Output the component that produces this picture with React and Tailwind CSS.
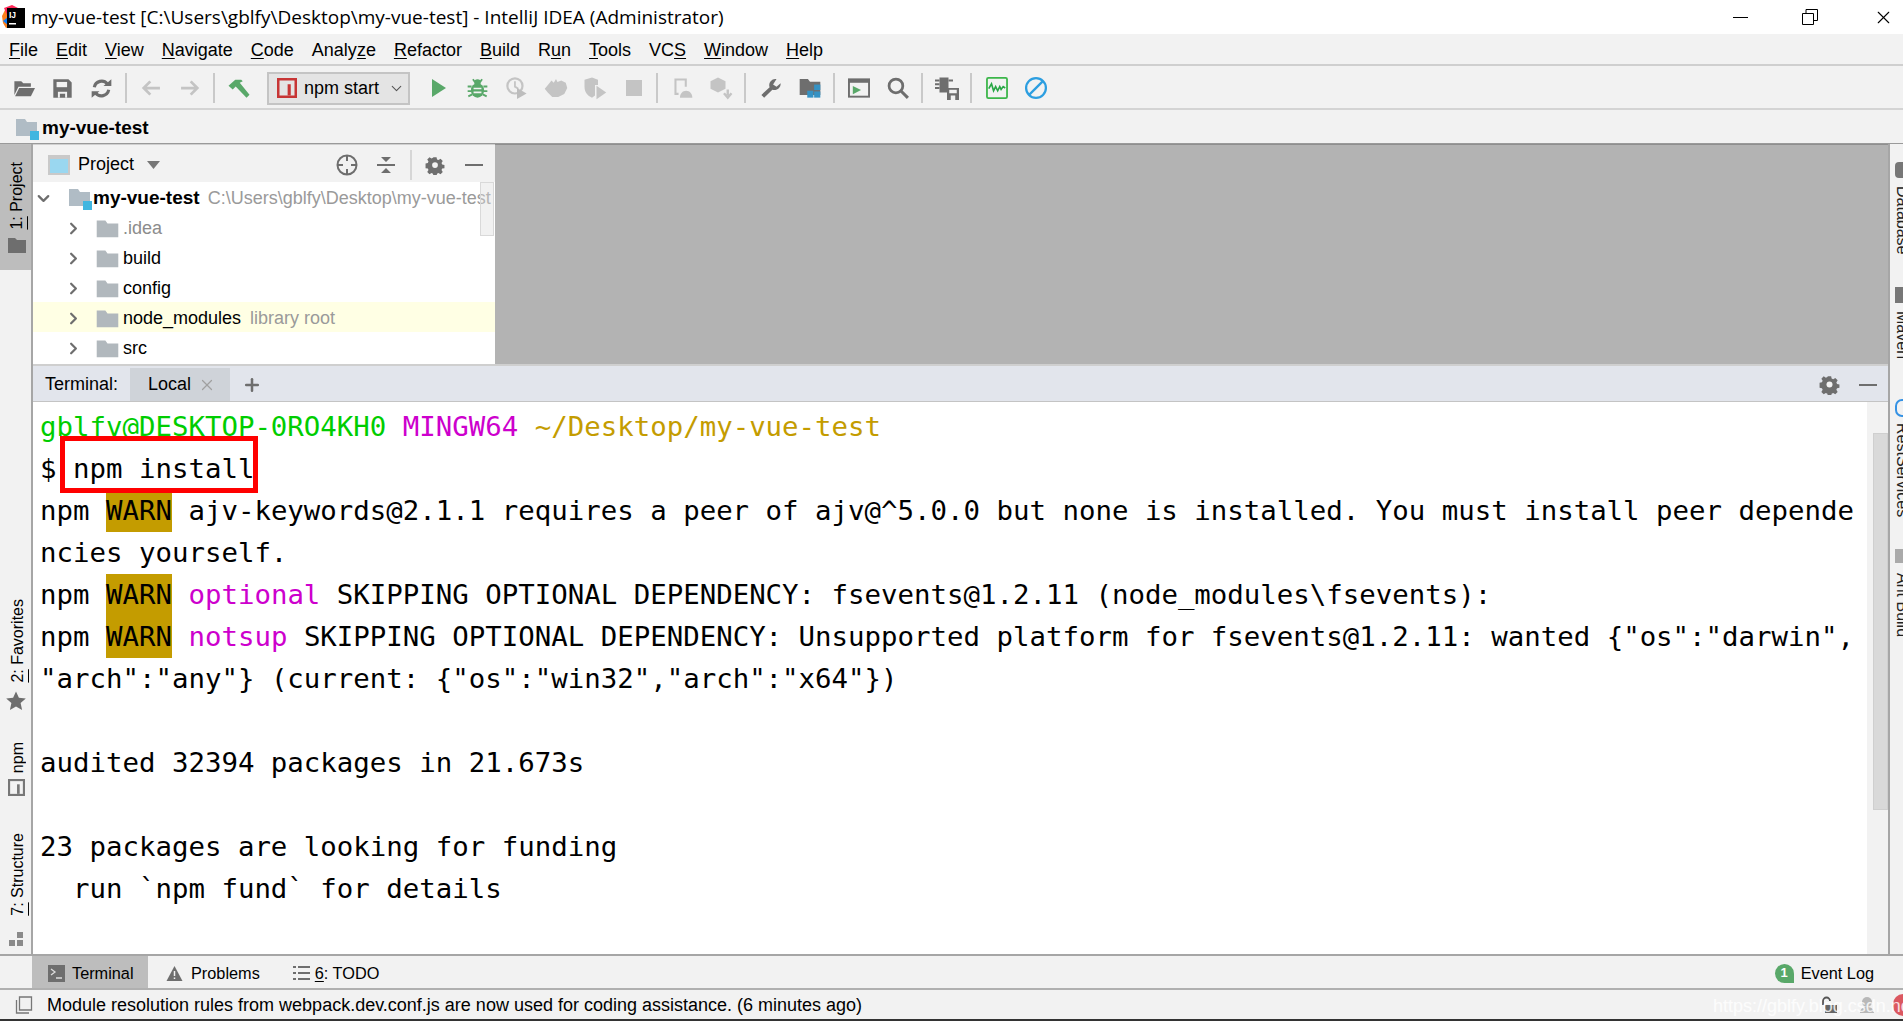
import { ChevronDown, ChevronRight, Plus, X } from 'lucide-react'

const sans = "font-['Liberation_Sans',Arial,sans-serif]"

const Svg = ({ size = 22, children, className = '' }) => (
  <svg width={size} height={size} viewBox="0 0 16 16" className={className}>
    {children}
  </svg>
)

const Folder = ({ fill = '#afb1b3', size = 23 }) => (
  <Svg size={size}>
    <path d="M0.5 2.5h6l1.5 2h7.5v9.5H0.5z" fill={fill} />
  </Svg>
)

const FolderBlue = () => (
  <svg width="24" height="24" viewBox="0 0 24 24">
    <path d="M1 3h9l2 3h10v14H1z" fill="#b0bcc5" />
    <rect x="15" y="15" width="9" height="9" fill="#40b6e0" />
  </svg>
)

const Gear = ({ size = 20 }) => (
  <Svg size={size}>
    <path
      d="M6.6 1h2.8l.4 2 1.3.6 1.8-1.1 2 2-1.1 1.8.6 1.3 2 .4v2.8l-2 .4-.6 1.3 1.1 1.8-2 2-1.8-1.1-1.3.6-.4 2H6.6l-.4-2-1.3-.6-1.8 1.1-2-2 1.1-1.8-.6-1.3-2-.4V6.6l2-.4.6-1.3L1.1 3.100l2-2 1.8 1.100 1.3-.6z"
      transform="translate(.8 .8) scale(.9)"
      fill="#6e6e6e"
    />
    <circle cx="8" cy="8" r="2.3" fill="#f2f2f2" />
  </Svg>
)

const Slot = ({ children }) => (
  <div className="w-[39px] h-full flex items-center justify-center shrink-0">{children}</div>
)
const Sep = ({ className = 'mx-[4px]' }) => <div className={`${className} w-[2px] h-[30px] bg-[#c9c9c9] shrink-0`} />

const toolbar = {
  open: (
    <Svg>
      <path d="M1 3h5l1.500 1.500H13V7H4L1 13z" fill="#6e6e6e" />
      <path d="M4.500 8H16l-3 6H1.500z" fill="#6e6e6e" />
    </Svg>
  ),
  save: (
    <Svg size={21}>
      <path d="M1 1h11.500L15 3.500V15H1z" fill="#6e6e6e" />
      <rect x="3.500" y="3" width="8" height="4" fill="#f2f2f2" />
      <rect x="4.500" y="10.500" width="7" height="4.500" fill="#f2f2f2" />
      <rect x="6" y="12" width="4" height="3" fill="#6e6e6e" />
    </Svg>
  ),
  sync: (
    <Svg size={21}>
      <path d="M2.500 7a5.700 5.700 0 0 1 10-2.500M13.500 9a5.700 5.700 0 0 1-10 2.500" fill="none" stroke="#6e6e6e" strokeWidth="2.400" />
      <path d="M9.500 6h6V1zM6.500 10h-6v5z" fill="#6e6e6e" />
    </Svg>
  ),
  back: (
    <Svg>
      <path d="M14.500 8H3M7.500 3.200 2.700 8l4.800 4.800" fill="none" stroke="#c4c4c4" strokeWidth="2" />
    </Svg>
  ),
  forward: (
    <Svg>
      <path d="M1.500 8H13M8.500 3.200 13.300 8l-4.800 4.800" fill="none" stroke="#c4c4c4" strokeWidth="2" />
    </Svg>
  ),
  hammer: (
    <Svg size={24}>
      <path d="M1 6.500 5.500 2.500h4l1 1-2 1 6.500 8-2 2L5.800 7l-2 2z" fill="#59a869" />
    </Svg>
  ),
  run: (
    <svg width="18" height="20" viewBox="0 0 18 20">
      <path d="M2 1l14 9-14 9z" fill="#59a869" />
    </svg>
  ),
  bug: (
    <Svg size={21}>
      <ellipse cx="8" cy="9.500" rx="5" ry="5.500" fill="#59a869" />
      <circle cx="8" cy="3.500" r="2.500" fill="#59a869" />
      <path d="M4.500 1 6 3M11.500 1 10 3M0.500 6.500h3M12.500 6.500h3M0.500 10h3M12.500 10h3M1 14l3-1.500M15 14l-3-1.500" stroke="#59a869" strokeWidth="1.400" />
      <path d="M5 8h6M5 11h6" stroke="#f2f2f2" strokeWidth="1.300" />
    </Svg>
  ),
  coverage: (
    <Svg>
      <circle cx="6.500" cy="6.500" r="5.500" fill="none" stroke="#c4c4c4" strokeWidth="1.600" />
      <path d="M6.500 3v4l2.500 1.500" fill="none" stroke="#c4c4c4" strokeWidth="1.300" />
      <path d="M8 8l7 4-7 4z" fill="#bdbdbd" />
    </Svg>
  ),
  profile: (
    <Svg size={24}>
      <path d="M0.500 8.500 3 5.500 5 3l1.500 1.500L8 2l1 2 2.500-1 3 1.500 1 3.500-2 4-4 2H5.500L2.500 11z" fill="#c4c4c4" />
    </Svg>
  ),
  shield: (
    <Svg size={24}>
      <path d="M1 2.500 6 1l4 1.500V6H8v7l-2 1.500C3 13 1 11 1 7z" fill="#c4c4c4" />
      <path d="M9 6.500l6.500 4.500L9 15.500z" fill="#c4c4c4" />
    </Svg>
  ),
  stop: <div className="w-[16px] h-[16px] bg-[#c4c4c4]" />,
  android: (
    <Svg>
      <path d="M2.500 1h9v6h-1.500V2.500H4v9h1.500V13H2.500z" fill="#c4c4c4" />
      <path d="M6.500 15c0-3 2-5 4.500-5s4.500 2 4.500 5z" fill="#c4c4c4" />
    </Svg>
  ),
  sdk: (
    <Svg size={24}>
      <path d="M6 1l5 2.500v5L6 11 1 8.500v-5z" fill="#c4c4c4" />
      <path d="M12.500 9v4M10 11.500l2.500 3 2.500-3" fill="none" stroke="#c4c4c4" strokeWidth="1.600" />
    </Svg>
  ),
  wrench: (
    <Svg>
      <path d="M15 4.500 12 7 9.500 5.500 12 1.500A4.500 4.500 0 0 0 7 7.500L1 13l2 2 6-5.800a4.500 4.500 0 0 0 6-4.700z" fill="#6e6e6e" />
    </Svg>
  ),
  folders: (
    <Svg>
      <path d="M0.500 1.500h6L8 3.500h7.500v9.500H0.500z" fill="#6e6e6e" />
      <rect x="11" y="5.500" width="4.500" height="4" fill="#3592c4" />
      <rect x="6" y="10" width="4.500" height="5" fill="#3592c4" />
      <rect x="11" y="10.500" width="4.500" height="4.500" fill="#3592c4" />
    </Svg>
  ),
  terminalRun: (
    <Svg>
      <rect x="0.700" y="1.700" width="14.600" height="12.600" fill="none" stroke="#6e6e6e" strokeWidth="1.400" />
      <rect x="0.700" y="1.700" width="14.600" height="2.500" fill="#6e6e6e" />
      <path d="M3.500 6.500 9.500 9.500 3.500 12.500z" fill="#59a869" />
    </Svg>
  ),
  search: (
    <Svg>
      <circle cx="6.500" cy="6.500" r="5" fill="none" stroke="#6e6e6e" strokeWidth="2" />
      <path d="M10 10l5.200 5.200" stroke="#6e6e6e" strokeWidth="2.200" />
    </Svg>
  ),
  memory: (
    <Svg size={24}>
      <rect x="3" y="1" width="6" height="10" fill="#6e6e6e" />
      <path d="M0 3h3M0 5.500h3M0 8h3M9 3h3" stroke="#6e6e6e" strokeWidth="1.200" />
      <rect x="8" y="8" width="8" height="8" fill="#6e6e6e" />
      <rect x="9.500" y="9.200" width="5" height="2.300" fill="#f2f2f2" />
      <rect x="10.500" y="13" width="3" height="3" fill="#f2f2f2" />
    </Svg>
  ),
  monitor: (
    <Svg>
      <rect x="0.700" y="0.700" width="14.600" height="14.600" rx="1" fill="none" stroke="#3cb64a" strokeWidth="1.300" />
      <path d="M2 8.500 4 5l1.500 5 1.500-3 1.500 3L10 7l1 2 1.500-2 1.500 1" fill="none" stroke="#28a745" strokeWidth="1.200" />
    </Svg>
  ),
  ban: (
    <Svg size={24}>
      <circle cx="8" cy="8" r="6.600" fill="none" stroke="#2c9ee0" strokeWidth="1.500" />
      <path d="M3.400 12.600 12.600 3.400" stroke="#2c9ee0" strokeWidth="1.500" />
    </Svg>
  ),
}

const NpmMark = ({ size = 20, color = '#c73535', className = '' }) => (
  <Svg size={size} className={className}>
    <rect x="1" y="1" width="14" height="14" fill="none" stroke={color} strokeWidth="2" />
    <rect x="8.500" y="5" width="2.500" height="9" fill={color} />
  </Svg>
)

const U = ({ children }) => <span className="underline underline-offset-2">{children}</span>

const menus = [
  ['', 'F', 'ile'], ['', 'E', 'dit'], ['', 'V', 'iew'], ['', 'N', 'avigate'], ['', 'C', 'ode'],
  ['Analy', 'z', 'e'], ['', 'R', 'efactor'], ['', 'B', 'uild'], ['R', 'u', 'n'], ['', 'T', 'ools'],
  ['VC', 'S', ''], ['', 'W', 'indow'], ['', 'H', 'elp'],
]

const TreeRow = ({ name, hint, dim, active }) => (
  <div className={`h-[30px] pt-[2px] flex items-center shrink-0 ${active ? 'bg-[#ffffe4]' : ''}`}>
    <ChevronRight size={19} strokeWidth={2.800} className="ml-[31px] text-[#6e6e6e]" />
    <div className="ml-[13px] w-[23px] h-[23px]"><Folder fill="#b1b8bd" /></div>
    <span className={`ml-[4px] ${dim ? 'text-[#8c8c8c]' : 'text-black'}`}>{name}</span>
    {hint && <span className="ml-[9px] text-[#9a9a9a]">{hint}</span>}
  </div>
)

const VTab = ({ children, className = '' }) => (
  <span className={`[writing-mode:vertical-rl] rotate-180 text-[16px] leading-none whitespace-pre ${className}`}>{children}</span>
)

const Warn = () => <span className="inline-block h-[42px] bg-[#c49c00]">WARN</span>
const Pink = ({ children }) => <span className="text-[#cd00cd]">{children}</span>

const Line = ({ children, className = '' }) => (
  <div className={`h-[42px] leading-[42px] whitespace-pre ${className}`}>{children || ' '}</div>
)

const RightTab = ({ label, icon, className }) => (
  <div className={`flex flex-col items-start ${className}`}>
    <div className="h-[18px] w-[14px] pl-[5px]">{icon}</div>
    <span className="[writing-mode:vertical-rl] pl-[4px] text-[16px] leading-none whitespace-pre mt-[6px] text-[#222]">{label}</span>
  </div>
)

export default function App() {
  return (
    <div className={`w-[1903px] h-[1021px] overflow-hidden flex flex-col bg-[#f2f2f2] text-black relative ${sans}`}>
      {/* title */}
      <div className="h-[34px] bg-white flex items-center shrink-0 relative">
        <svg width="24" height="24" viewBox="0 0 24 24" className="ml-[2px]">
          <path d="M0 11 4 3l6-2v20l-6 2L1 18z" fill="#fc801d" />
          <path d="M2 3l8-3 6 3L6 12z" fill="#fe2857" />
          <path d="M1 16l5-4v8z" fill="#087cfa" />
          <rect x="5" y="3" width="18" height="20" fill="#000" />
          <text x="7" y="13" fontSize="8.500" fontWeight="700" fill="#fff" fontFamily="Liberation Sans">IJ</text>
          <rect x="7" y="18" width="7" height="1.500" fill="#fff" />
        </svg>
        <span className="ml-[5px] text-[19px] font-['Open_Sans',sans-serif]">
          my-vue-test [C:\Users\gblfy\Desktop\my-vue-test] - IntelliJ IDEA (Administrator)
        </span>
        <div className="ml-auto flex items-center h-full">
          <div className="w-[15px] h-[1px] bg-black mr-[54px]" />
          <svg width="16" height="16" viewBox="0 0 16 16" className="mr-[55px]">
            <path d="M0.500 4.500h11v11h-11zM4 4.500v-4h11.500v11h-4" fill="none" stroke="#000" />
          </svg>
          <X size={21} strokeWidth={1.100} absoluteStrokeWidth className="mr-[9px] text-black" />
        </div>
      </div>

      {/* menu */}
      <div className="h-[32px] pt-[2px] flex items-center gap-[18px] pl-[9px] text-[18px] border-b-2 border-[#cfcfcf] shrink-0">
        {menus.map(([a, b, c]) => (
          <span key={a + b + c}>{a}<U>{b}</U>{c}</span>
        ))}
      </div>

      {/* toolbar */}
      <div className="h-[44px] pt-[2px] flex items-center pl-[4px] border-b-2 border-[#d4d4d4] shrink-0">
        <Slot>{toolbar.open}</Slot>
        <Slot>{toolbar.save}</Slot>
        <Slot>{toolbar.sync}</Slot>
        <Sep />
        <Slot>{toolbar.back}</Slot>
        <Slot>{toolbar.forward}</Slot>
        <Sep />
        <Slot>{toolbar.hammer}</Slot>
        <div className="ml-[9px] mr-[9px] w-[143px] h-[33px] shrink-0 bg-[#e4e4e4] border-2 border-[#c4c4c4] flex items-center text-[18px]">
          <NpmMark size={20} className="ml-[8px]" />
          <span className="ml-[7px]">npm start</span>
          <ChevronDown size={17} strokeWidth={1.500} className="ml-[9px] text-[#555]" />
        </div>
        <Slot>{toolbar.run}</Slot>
        <Slot>{toolbar.bug}</Slot>
        <Slot>{toolbar.coverage}</Slot>
        <Slot>{toolbar.profile}</Slot>
        <Slot>{toolbar.shield}</Slot>
        <Slot>{toolbar.stop}</Slot>
        <Sep className="ml-[3px] mr-[4px]" />
        <Slot>{toolbar.android}</Slot>
        <Slot>{toolbar.sdk}</Slot>
        <Sep className="ml-[4px] mr-[5px]" />
        <Slot>{toolbar.wrench}</Slot>
        <Slot>{toolbar.folders}</Slot>
        <Sep />
        <Slot>{toolbar.terminalRun}</Slot>
        <Slot>{toolbar.search}</Slot>
        <Sep />
        <Slot>{toolbar.memory}</Slot>
        <Sep className="ml-[4px] mr-[5px]" />
        <Slot>{toolbar.monitor}</Slot>
        <Slot>{toolbar.ban}</Slot>
      </div>

      {/* navigation bar */}
      <div className="h-[34px] pt-[3px] flex items-center pl-[15px] shrink-0 border-b border-[#9a9a9a]">
        <FolderBlue />
        <span className="ml-[3px] text-[19px] font-bold">my-vue-test</span>
      </div>

      {/* main */}
      <div className="flex-1 min-h-0 flex">
        {/* left strip */}
        <div className="w-[33px] shrink-0 border-r-2 border-[#a6a6a6] flex flex-col items-center">
          <div className="w-[31px] h-[126px] bg-[#bdbdbd] flex flex-col items-center pt-[18px] pl-[3px] shrink-0">
            <VTab><U>1:</U> Project</VTab>
            <svg width="18" height="15" viewBox="0 0 18 15" className="mt-[8px]">
              <path d="M0 0h7l2 2h9v13H0z" fill="#6e6e6e" />
            </svg>
          </div>
          <div className="mt-[329px] pl-[4px]"><VTab><U>2:</U> Favorites</VTab></div>
          <svg width="20" height="20" viewBox="0 0 20 20" className="mt-[1px] ml-[1px]">
            <path d="M10 0.500l2.900 6.300 6.900.7-5.200 4.600 1.500 6.900L10 15.500 3.900 19l1.500-6.900L.2 7.500l6.900-.7z" fill="#6e6e6e" />
          </svg>
          <div className="mt-[31px] pl-[4px]"><VTab>npm</VTab></div>
          <div className="mt-[-1px] h-[17px] ml-[1px]"><NpmMark size={17} color="#777" /></div>
          <div className="mt-[37px] pl-[4px]"><VTab><U>7:</U> Structure</VTab></div>
          <svg width="16" height="16" viewBox="0 0 16 16" className="mt-[9px]">
            <path d="M9 1h6v6H9zM1 9h6v6H1zM9 9h6v6H9z" fill="#8a8a8a" />
          </svg>
        </div>

        {/* centre */}
        <div className="flex-1 min-w-0 flex flex-col">
          <div className="h-[220px] flex shrink-0">
            <div className="w-[462px] flex flex-col shrink-0 bg-white text-[18px] relative">
              <div className="h-[38px] pt-[2px] bg-[#f2f2f2] flex items-center shrink-0 text-[18px] border-t border-[#d0d0d0]">
                <svg width="22" height="20" viewBox="0 0 22 20" className="ml-[15px]">
                  <rect x="0" y="0" width="22" height="20" fill="#c9c9c9" />
                  <rect x="2" y="4" width="18" height="14" fill="#9ad7f0" />
                </svg>
                <span className="ml-[8px]">Project</span>
                <svg width="13" height="8" viewBox="0 0 13 8" className="ml-[13px]"><path d="M0 0h13L6.500 8z" fill="#777" /></svg>
                <svg width="22" height="22" viewBox="0 0 22 22" className="ml-[176px]">
                  <circle cx="11" cy="11" r="9.500" fill="none" stroke="#6e6e6e" strokeWidth="2" />
                  <path d="M11 1v6M11 15v6M1 11h6M15 11h6" stroke="#6e6e6e" strokeWidth="2" />
                </svg>
                <svg width="18" height="18" viewBox="0 0 18 18" className="ml-[19px]">
                  <path d="M0 9h18" stroke="#6e6e6e" strokeWidth="2" />
                  <path d="M4 1h10L9 6zM4 17h10l-5-5z" fill="#6e6e6e" />
                </svg>
                <div className="ml-[15px] w-[2px] h-[30px] bg-[#d6d6d6]" />
                <div className="ml-[13px]"><Gear /></div>
                <div className="ml-[20px] w-[18px] h-[2px] bg-[#6e6e6e]" />
              </div>
              <div className="h-[30px] pt-[2px] flex items-center shrink-0 whitespace-pre">
                <ChevronDown size={19} strokeWidth={2.800} className="ml-[1px] text-[#6e6e6e]" />
                <div className="ml-[15px]"><FolderBlue /></div>
                <span className="ml-[1px] font-bold text-[19px]">my-vue-test</span>
                <span className="ml-[8px] text-[#9a9a9a]">C:\Users\gblfy\Desktop\my-vue-test</span>
              </div>
              <TreeRow name=".idea" dim />
              <TreeRow name="build" />
              <TreeRow name="config" />
              <TreeRow name="node_modules" hint="library root" active />
              <TreeRow name="src" />
              <div className="absolute right-[1px] top-[38px] w-[14px] h-[54px] bg-[#dcdcdc]/40 border border-[#d9d9d9]" />
            </div>
            <div className="flex-1 bg-[#b3b3b3] border-t border-[#8f8f8f]" />
          </div>

          {/* terminal */}
          <div className="h-[38px] pt-[2px] bg-[#e2e5ec] flex items-center text-[18px] shrink-0 border-t-2 border-[#cfcfcf] border-b border-b-[#c4c4c4]">
            <span className="ml-[12px]">Terminal:</span>
            <div className="ml-[12px] w-[100px] pl-[18px] h-full bg-[#cfd3d9] flex items-center">
              <span>Local</span>
              <X size={18} strokeWidth={1.600} className="ml-[7px] text-[#a0a0a0] shrink-0" />
            </div>
            <Plus size={20} strokeWidth={3} className="ml-[12px] text-[#6e6e6e]" />
            <div className="ml-auto"><Gear size={21} /></div>
            <div className="ml-[19px] mr-[11px] w-[18px] h-[2px] bg-[#6e6e6e]" />
          </div>
          <div className="flex-1 min-h-0 flex">
            <div className="flex-1 min-w-0 bg-white pl-[7px] pt-[4px] font-['DejaVu_Sans_Mono',monospace] text-[27.400px] overflow-hidden">
              <Line>
                <span className="text-[#00cd00]">gblfv@DESKTOP-0RO4KH0</span> <Pink>MINGW64</Pink>{' '}
                <span className="text-[#c49c00]">~/Desktop/my-vue-test</span>
              </Line>
              <Line className="relative z-10">
                <div className="absolute left-[20px] top-[-12px] w-[198px] h-[57px] border-[5px] border-[#ff0000] bg-white" />
                <span className="relative">$ npm install</span>
              </Line>
              <Line>npm <Warn /> ajv-keywords@2.1.1 requires a peer of ajv@^5.0.0 but none is installed. You must install peer depende</Line>
              <Line>ncies yourself.</Line>
              <Line>npm <Warn /> <Pink>optional</Pink> SKIPPING OPTIONAL DEPENDENCY: fsevents@1.2.11 (node_modules\fsevents):</Line>
              <Line>npm <Warn /> <Pink>notsup</Pink> SKIPPING OPTIONAL DEPENDENCY: Unsupported platform for fsevents@1.2.11: wanted {'{'}"os":"darwin",</Line>
              <Line>"arch":"any"{'}'} (current: {'{'}"os":"win32","arch":"x64"{'}'})</Line>
              <Line />
              <Line>audited 32394 packages in 21.673s</Line>
              <Line />
              <Line>23 packages are looking for funding</Line>
              <Line>{'  '}run `npm fund` for details</Line>
            </div>
            <div className="w-[21px] bg-[#f2f2f2] shrink-0 flex justify-end pt-[31px]">
              <div className="w-[15px] h-[377px] bg-[#d9d9d9] border border-[#cfcfcf]" />
            </div>
          </div>
        </div>

        {/* right strip */}
        <div className="w-[15px] shrink-0 border-l-2 border-[#a6a6a6] overflow-hidden flex flex-col">
          <RightTab
            className="pt-[18px]"
            label="Database"
            icon={<div className="w-[12px] h-[16px] rounded-[4px] bg-[#777]" />}
          />
          <RightTab
            className="pt-[32px]"
            label="Maven"
            icon={<div className="w-[12px] h-[16px] bg-[#777]" />}
          />
          <RightTab
            className="pt-[40px]"
            label="RestServices"
            icon={<div className="w-[14px] h-[18px] rounded-full border-2 border-[#3592e4]" />}
          />
          <RightTab
            className="pt-[32px]"
            label="Ant Build"
            icon={<div className="w-[12px] h-[14px] bg-[#aaa]" />}
          />
        </div>
      </div>

      {/* tool window bar */}
      <div className="h-[34px] border-t-2 border-[#a6a6a6] flex items-stretch text-[16.300px] shrink-0 relative">
        <div className="ml-[32px] pt-[2px] w-[116px] bg-[#bdbdbd] flex items-center">
          <svg width="17" height="17" viewBox="0 0 17 17" className="ml-[16px]">
            <rect width="17" height="17" fill="#6e6e6e" />
            <path d="M3 4l4 3-4 3M8 13h6" fill="none" stroke="#ddd" strokeWidth="1.300" />
          </svg>
          <span className="ml-[7px]">Terminal</span>
        </div>
        <div className="ml-[18px] pt-[2px] flex items-center">
          <svg width="17" height="17" viewBox="0 0 17 17">
            <path d="M8.500 1 16.500 16H.5z" fill="#6e6e6e" />
            <path d="M8.500 6v5M8.500 12.500v1.500" stroke="#f2f2f2" strokeWidth="1.500" />
          </svg>
          <span className="ml-[8px]">Problems</span>
        </div>
        <div className="ml-[33px] pt-[2px] flex items-center">
          <svg width="17" height="14" viewBox="0 0 17 14">
            <path d="M0 1h3M5 1h12M0 7h3M5 7h12M0 13h3M5 13h12" stroke="#6e6e6e" strokeWidth="2" />
          </svg>
          <span className="ml-[5px]"><U>6</U>: TODO</span>
        </div>
        <div className="ml-auto mr-[29px] pt-[2px] flex items-center">
          <div className="w-[19px] h-[19px] rounded-full rounded-br-none bg-[#59a869] text-white text-[13px] font-bold flex items-center justify-center">1</div>
          <span className="ml-[7px]">Event Log</span>
        </div>
      </div>

      {/* status bar */}
      <div className="h-[33px] pt-[1px] border-t-2 border-[#b0b0b0] border-b-2 border-b-[#333] flex items-center shrink-0 text-[18px]">
        <svg width="18" height="18" viewBox="0 0 18 18" className="ml-[15px]">
          <path d="M4.500 1h12v13h-12zM1.500 4v13H14" fill="none" stroke="#777" strokeWidth="1.300" />
        </svg>
        <span className="ml-[14px] whitespace-pre">Module resolution rules from webpack.dev.conf.js are now used for coding assistance. (6 minutes ago)</span>
        <div className="ml-auto flex items-center">
          <svg width="17" height="18" viewBox="0 0 17 18" className="mr-[22px]">
            <path d="M3 9V5a3.500 3.500 0 0 1 7 0" fill="none" stroke="#555" strokeWidth="1.800" />
            <rect x="5" y="9" width="12" height="8" fill="#666" />
          </svg>
          <svg width="16" height="18" viewBox="0 0 16 18" className="mr-[18px]">
            <circle cx="8" cy="6" r="5" fill="#b8b8b8" />
            <path d="M1 17c0-4 3-6 7-6s7 2 7 6z" fill="#b8b8b8" />
          </svg>
          <div className="w-[10px] h-[22px] rounded-l-full bg-[#db5860]" />
        </div>
      </div>

      <span className="absolute left-[1713px] top-[993px] text-[18px] text-white/80 whitespace-pre">https://gblfy.blog.csdn.net</span>
    </div>
  )
}
